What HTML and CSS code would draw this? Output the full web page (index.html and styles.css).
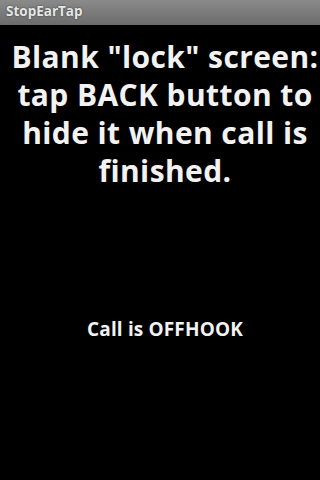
FILE: index.html
```html
<!DOCTYPE html>
<html>
<head>
<meta charset="utf-8">
<link rel="stylesheet" href="styles.css">
</head>
<body>
<div class="titlebar"><span class="title">StopEarTap</span></div>
<main class="content">
  <p class="message">Blank "lock" screen: tap BACK button to hide it when call is finished.</p>
  <p class="status">Call is OFFHOOK</p>
</main>
</body>
</html>
```
FILE: styles.css
```css
html, body {
  margin: 0;
  padding: 0;
  background: #000;
  width: 320px;
  height: 480px;
  overflow: hidden;
  font-family: "Open Sans", "DejaVu Sans", sans-serif;
}
.titlebar {
  height: 25px;
  box-sizing: border-box;
  background: linear-gradient(#8a8a8a, #6c6c6c);
  padding-left: 6px;
}
.title {
  display: block;
  color: #e6e6e6;
  font-weight: 700;
  font-size: 13.5px;
  text-shadow: 0 0 2px #333;
  line-height: 23px;
}
.content {
  display: flex;
  flex-direction: column;
  align-items: center;
  padding-left: 10px;
}
.message {
  margin: 12.5px 0 0 0;
  color: #f2f2f2;
  font-weight: 700;
  font-size: 30px;
  letter-spacing: 0.4px;
  line-height: 38.3px;
  text-align: center;
  width: 310px;
}
.status {
  margin: 125.7px 0 0 0;
  color: #f2f2f2;
  font-weight: 700;
  font-size: 19px;
  letter-spacing: 0.15px;
  text-align: center;
}
```
